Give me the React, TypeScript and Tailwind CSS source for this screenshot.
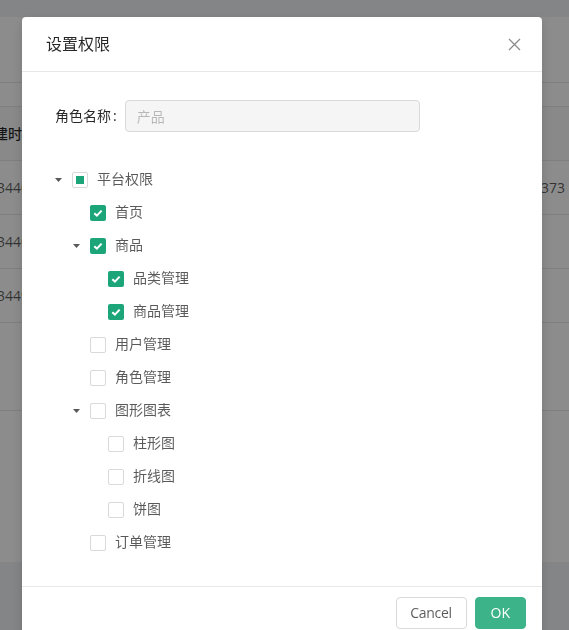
import React from "react";

type Node = {
  title: string;
  state: "checked" | "half" | "none";
  children?: Node[];
};

const tree: Node[] = [
  {
    title: "平台权限",
    state: "half",
    children: [
      { title: "首页", state: "checked" },
      {
        title: "商品",
        state: "checked",
        children: [
          { title: "品类管理", state: "checked" },
          { title: "商品管理", state: "checked" },
        ],
      },
      { title: "用户管理", state: "none" },
      { title: "角色管理", state: "none" },
      {
        title: "图形图表",
        state: "none",
        children: [
          { title: "柱形图", state: "none" },
          { title: "折线图", state: "none" },
          { title: "饼图", state: "none" },
        ],
      },
      { title: "订单管理", state: "none" },
    ],
  },
];

const indent = ["pl-0", "pl-[18px]", "pl-[36px]"];

function flatten(nodes: Node[], level = 0): { node: Node; level: number }[] {
  return nodes.flatMap((n) => [{ node: n, level }, ...(n.children ? flatten(n.children, level + 1) : [])]);
}

function Checkbox({ state }: { state: Node["state"] }) {
  if (state === "checked") {
    return (
      <span className="mt-[9px] ml-[2px] flex h-4 w-4 shrink-0 items-center justify-center rounded-[2px] bg-[#1da57a]">
        <svg width="16" height="16" viewBox="0 0 16 16">
          <polyline points="4.3,8.2 6.9,10.6 11.6,5.6" fill="none" stroke="#fff" strokeWidth="2" />
        </svg>
      </span>
    );
  }
  return (
    <span className="mt-[9px] ml-[2px] flex h-4 w-4 shrink-0 items-center justify-center rounded-[2px] border border-[#d9d9d9] bg-white">
      {state === "half" && <span className="h-2 w-2 bg-[#1da57a]" />}
    </span>
  );
}

function TreeRow({ node, level }: { node: Node; level: number }) {
  return (
    <div className={`flex h-[33px] items-start ${indent[level]}`}>
      <span className="flex h-[33px] w-6 shrink-0 justify-center">
        {node.children && (
          <svg className="mt-[15px]" width="7" height="4" viewBox="0 0 7 4">
            <polygon points="0,0 7,0 3.5,4" fill="#595959" />
          </svg>
        )}
      </span>
      <Checkbox state={node.state} />
      <span className="mt-[4px] ml-[4px] px-[5px] text-sm leading-[24px] text-black/65">{node.title}</span>
    </div>
  );
}

export default function App() {
  const rows = flatten(tree);
  return (
    <div
      className="relative h-[630px] w-full overflow-hidden bg-[#f0f2f5] text-sm"
      style={{ fontFamily: '"Open Sans", "Noto Sans CJK SC", sans-serif' }}
    >
      {/* page behind the dialog */}
      <div className="pt-[17px]">
        <div className="h-[545px] bg-white">
          <div className="h-[66px] border-b border-[#e8e8e8]" />
          <div className="pt-[23px]">
            <div className="flex h-[55px] items-center border-y border-[#e8e8e8] bg-[#fafafa] font-medium text-black/85">
              <span className="-ml-[20px]">创建时间</span>
            </div>
            <div className="flex h-[54px] items-center border-b border-[#e8e8e8] text-black/65">
              <span className="-ml-[3px] w-[544px] shrink-0">3440851</span>
              <span>373</span>
            </div>
            <div className="flex h-[54px] items-center border-b border-[#e8e8e8] text-black/65">
              <span className="-ml-[3px]">3440921</span>
            </div>
            <div className="flex h-[54px] items-center border-b border-[#e8e8e8] text-black/65">
              <span className="-ml-[3px]">3449166</span>
            </div>
            <div className="h-[88px] border-b border-[#e8e8e8]" />
          </div>
        </div>
      </div>

      {/* mask + dialog */}
      <div className="fixed inset-0 bg-black/45 pl-[22px] pt-[17px]">
        <div className="w-[520px] rounded bg-white shadow-[0_4px_12px_rgba(0,0,0,0.15)]">
          <div className="flex items-start justify-between border-b border-[#e8e8e8]">
            <div className="px-6 py-4 text-base leading-[22px] text-black/85">设置权限</div>
            <button className="flex h-[54px] w-14 items-center justify-center">
              <svg width="13" height="13" viewBox="0 0 13 13">
                <path d="M1 1 L12 12 M12 1 L1 12" stroke="#8c8c8c" strokeWidth="1.3" fill="none" />
              </svg>
            </button>
          </div>

          <div className="p-6">
            <div className="mb-6 flex h-10 items-center">
              <label className="w-[78.67px] shrink-0 pr-2 text-right text-black/85">
                角色名称<span className="ml-[2px]">:</span>
              </label>
              <input
                disabled
                placeholder="产品"
                className="h-8 w-[295px] rounded border border-[#d9d9d9] bg-[#f5f5f5] px-[11px] text-sm text-black/25 outline-none placeholder:text-black/25"
              />
            </div>

            <div className="py-[3px]">
              {rows.map((r, i) => (
                <TreeRow key={i} node={r.node} level={r.level} />
              ))}
            </div>
          </div>

          <div className="flex justify-end gap-2 border-t border-[#e8e8e8] px-4 py-[10px]">
            <button className="flex h-8 w-[71px] items-center justify-center rounded border border-[#d9d9d9] bg-white text-sm tracking-[-0.3px] text-black/65">
              Cancel
            </button>
            <button className="h-8 rounded border border-[#3db389] bg-[#3db389] px-[15px] text-sm text-white">
              OK
            </button>
          </div>
        </div>
      </div>
    </div>
  );
}
